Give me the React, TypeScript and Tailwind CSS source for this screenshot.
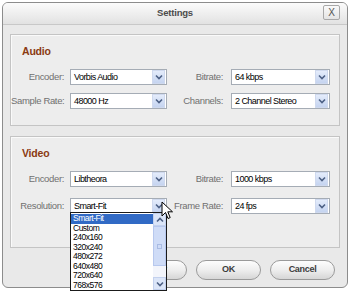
import React from "react";

const font = { fontFamily: '"Liberation Sans", Arial, sans-serif' };

function Chevron() {
  return (
    <svg width="8" height="6" viewBox="0 0 8 6">
      <path d="M1 1.5 L4 4.5 L7 1.5" fill="none" stroke="#4d6185" strokeWidth="1.6" />
    </svg>
  );
}

function Select({ value, width }: { value: string; width: string }) {
  return (
    <div className={`${width} h-[16px] flex items-center bg-white border border-[#a5acb5] text-[9px] tracking-[-0.55px] text-black`}>
      <span className="flex-1 pl-[3px] leading-none whitespace-nowrap overflow-hidden">{value}</span>
      <span className="w-[13px] h-[14px] mr-[1px] flex items-center justify-center bg-gradient-to-b from-[#e4ecfb] to-[#c5d4f0] border border-[#cfd9ee]">
        <Chevron />
      </span>
    </div>
  );
}

function Row({ l1, v1, l2, v2 }: { l1: string; v1: string; l2: string; v2: string }) {
  return (
    <div className="flex items-center h-[16px]">
      <span className="w-[53px] text-right text-[9.5px] tracking-[-0.35px] text-[#707070] whitespace-nowrap">{l1}</span>
      <span className="ml-[6px]">
        <Select value={v1} width="w-[97px]" />
      </span>
      <span className="w-[56px] text-right text-[9.5px] tracking-[-0.35px] text-[#707070] whitespace-nowrap">{l2}</span>
      <span className="ml-[8px]">
        <Select value={v2} width="w-[99px]" />
      </span>
    </div>
  );
}

function Group({ title, height, children }: { title: string; height: string; children: React.ReactNode }) {
  return (
    <div className={`${height} border border-[#c4c4c4] bg-[#ededed] shadow-[inset_1px_1px_0_#fafafa]`}>
      <div className="pl-[11px] pt-[9px] h-[34px] text-[10.5px] tracking-[-0.2px] font-bold text-[#8a3a12]">{title}</div>
      {children}
    </div>
  );
}

function Cursor() {
  return (
    <svg width="13" height="19" viewBox="0 0 13 19" className="absolute left-[161px] top-[201px]">
      <path d="M1 1 L1 15 L4.5 11.5 L7 17.5 L9.2 16.6 L6.8 10.8 L11.5 10.8 Z" fill="#fff" stroke="#000" strokeWidth="1" strokeLinejoin="round" />
    </svg>
  );
}

const items = ["Smart-Fit", "Custom", "240x160", "320x240", "480x272", "640x480", "720x640", "768x576"];

function DropList() {
  return (
    <div className="absolute left-[70px] top-[212px] w-[97px] h-[79px] bg-white border border-[#1a1a1a] flex text-[8.5px] tracking-[-0.5px] leading-[9.5px]">
      <div className="flex-1 pt-[1px]">
        {items.map((it, i) => (
          <div key={it} className={`h-[9.5px] pl-[2px] overflow-hidden ${i === 0 ? "bg-[#316ac5] text-white" : "text-black"}`}>
            {it}
          </div>
        ))}
      </div>
      <div className="w-[13px] flex flex-col bg-[#f3f5fb]">
        <div className="h-[13px] flex items-center justify-center bg-[#dbe5f8] border border-[#c3d1ee]">
          <svg width="8" height="6" viewBox="0 0 8 6">
            <path d="M1 4.5 L4 1.5 L7 4.5" fill="none" stroke="#4d6185" strokeWidth="1.6" />
          </svg>
        </div>
        <div className="h-[40px] flex items-center justify-center bg-[#cfdcf7] border border-[#b7c8ee]">
          <div className="w-[5px] h-[5px] border border-[#a9bbe3]"></div>
        </div>
        <div className="flex-1"></div>
        <div className="h-[13px] flex items-center justify-center bg-[#dbe5f8] border border-[#c3d1ee]">
          <Chevron />
        </div>
      </div>
    </div>
  );
}

function Button({ label, width }: { label: string; width: string }) {
  return (
    <div className={`${width} h-[20px] rounded-full border border-[#9a9a9a] bg-gradient-to-b from-[#fdfdfd] via-[#eeeeee] to-[#d6d6d6] flex items-center justify-center text-[9px] tracking-[-0.3px] font-bold text-[#3c3c3c]`}>
      {label}
    </div>
  );
}

export default function App() {
  return (
    <div className="relative w-[350px] h-[291px] bg-white overflow-hidden" style={font}>
      <div className="absolute left-[2px] top-[2px] w-[346px] h-[286px] rounded-[6px] border border-[#8c8c8c] bg-[#e9e9e9] overflow-hidden flex flex-col">
        <div className="h-[22px] flex items-center justify-center relative bg-gradient-to-b from-[#fbfbfb] to-[#e2e2e2] border-b border-[#c8c8c8]">
          <span className="text-[9.5px] tracking-[-0.2px] font-bold text-[#4b4b4b]">Settings</span>
          <div className="absolute right-[7px] top-[2px] w-[17px] h-[15px] border border-[#a8a8a8] rounded-[2px] bg-gradient-to-b from-[#fafafa] to-[#e4e4e4] flex items-center justify-center text-[10px] text-[#555]">
            X
          </div>
        </div>
        <div className="px-[7px] pt-[9px] flex flex-col">
          <Group title="Audio" height="h-[92px]">
            <div className="flex flex-col gap-[8px]">
              <Row l1="Encoder:" v1="Vorbis Audio" l2="Bitrate:" v2="64 kbps" />
              <Row l1="Sample Rate:" v1="48000 Hz" l2="Channels:" v2="2 Channel Stereo" />
            </div>
          </Group>
          <div className="h-[10px]"></div>
          <Group title="Video" height="h-[112px]">
            <div className="flex flex-col gap-[11px]">
              <Row l1="Encoder:" v1="Libtheora" l2="Bitrate:" v2="1000 kbps" />
              <Row l1="Resolution:" v1="Smart-Fit" l2="Frame Rate:" v2="24 fps" />
            </div>
          </Group>
          <div className="flex justify-end gap-[9px] pr-[5px] mt-[12px]">
            <Button label="Apply" width="w-[64px]" />
            <Button label="OK" width="w-[65px]" />
            <Button label="Cancel" width="w-[65px]" />
          </div>
        </div>
      </div>
      <DropList />
      <Cursor />
    </div>
  );
}
